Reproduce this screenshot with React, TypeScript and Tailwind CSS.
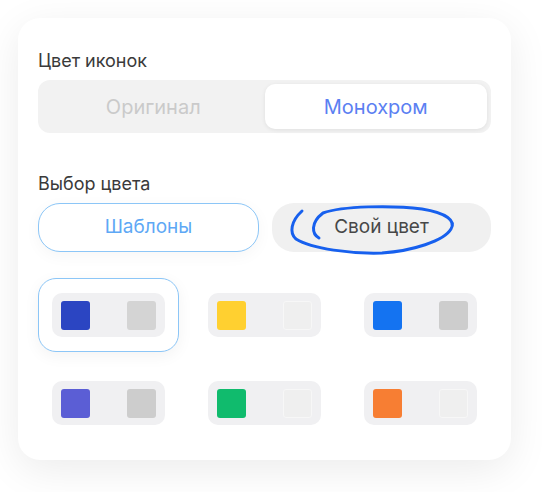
const TOP = [
  { main: "#2b45c2", alt: "#d4d4d4", selected: true },
  { main: "#ffd030", alt: "#efefef", light: true },
  { main: "#1473f1", alt: "#cdcdcd" },
];

const BOTTOM = [
  { main: "#5b5ed5", alt: "#cdcdcd" },
  { main: "#10bb6d", alt: "#efefef", light: true },
  { main: "#f77e33", alt: "#efefef", light: true },
];

type Swatch = { main: string; alt: string; selected?: boolean; light?: boolean };

function SwatchItem({ s }: { s: Swatch }) {
  return (
    <div
      className={`w-[141px] h-[74px] flex items-center justify-center rounded-[18px] ${
        s.selected
          ? "bg-white border-[1.5px] border-[#8cc6f7] shadow-[0_4px_16px_rgba(0,0,0,0.05)]"
          : ""
      }`}
    >
      <div className="w-[113px] h-[44px] rounded-[10px] bg-[#f0f0f2] flex items-center justify-between px-[9px]">
        <span className="w-[29px] h-[29px] rounded-[3px]" style={{ background: s.main }} />
        <span
          className={`w-[29px] h-[29px] rounded-[3px] ${s.light ? "border-[1.5px] border-[#f7f7f7]" : ""}`}
          style={{ background: s.alt }}
        />
      </div>
    </div>
  );
}

export default function App() {
  return (
    <div
      className="w-[542px] h-[492px] bg-white pt-[18px] pl-[18px]"
      style={{ fontFamily: "Inter, 'Noto Sans', sans-serif" }}
    >
      <div className="w-[493px] h-[442px] bg-white rounded-[22px] shadow-[0_10px_40px_rgba(0,0,0,0.08)] px-[20px] pt-[31px]">
        <div className="text-[18px] leading-[24px] text-[#3a3a3a]">Цвет иконок</div>

        {/* segmented */}
        <div className="mt-[7px] h-[53px] rounded-[12px] bg-[#f2f2f2] p-[4px] flex">
          <div className="flex-1 flex items-center justify-center text-[20px] text-[#cacaca]">
            Оригинал
          </div>
          <div className="flex-1 flex items-center justify-center rounded-[10px] bg-white shadow-[0_1px_4px_rgba(0,0,0,0.08)] text-[20px] text-[#5b80f2]">
            Монохром
          </div>
        </div>

        <div className="mt-[39px] text-[18px] leading-[24px] text-[#3a3a3a]">Выбор цвета</div>

        <div className="mt-[7px] flex justify-between">
          <div className="w-[221px] h-[49px] rounded-[22px] border-[1.5px] border-[#8cc6f7] bg-white flex items-center justify-center text-[19px] text-[#5ea8f5] shadow-[0_4px_16px_rgba(0,0,0,0.04)]">
            Шаблоны
          </div>
          <div className="relative w-[219px] h-[49px] rounded-[22px] bg-[#f0f0f0] flex items-center justify-center text-[19px] text-[#474747]">
            <span>Свой цвет</span>
            <svg
              className="absolute left-0 top-0 overflow-visible"
              width="219"
              height="49"
              viewBox="0 0 219 49"
              fill="none"
            >
              <path
                d="M47 35 C40 31 38 20 51 10 C70 3 120 2 150 6 C175 10 184 18 179 26 C172 38 140 48 110 50 C80 51 40 46 24 36 C17 30 19 18 30 8"
                stroke="#1760ee"
                strokeWidth="3"
                strokeLinecap="round"
              />
            </svg>
          </div>
        </div>

        <div className="mt-[26px] flex justify-between">
          {TOP.map((s, i) => (
            <SwatchItem key={i} s={s} />
          ))}
        </div>
        <div className="mt-[14px] flex justify-between">
          {BOTTOM.map((s, i) => (
            <SwatchItem key={i} s={s} />
          ))}
        </div>
      </div>
    </div>
  );
}
